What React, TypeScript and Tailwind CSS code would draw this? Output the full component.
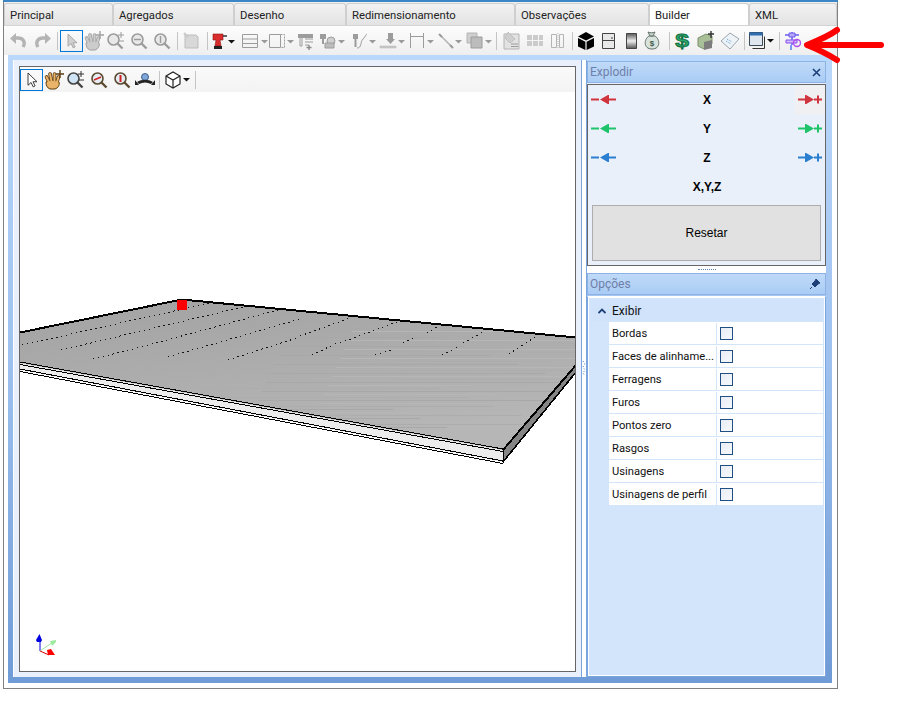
import type { ReactNode } from "react";

const tabs = [
  { label: "Principal", w: "w-[109px]" },
  { label: "Agregados", w: "w-[121px]" },
  { label: "Desenho", w: "w-[112px]" },
  { label: "Redimensionamento", w: "w-[169px]" },
  { label: "Observações", w: "w-[134px]" },
  { label: "Builder", w: "w-[100px]", active: true },
  { label: "XML", w: "w-[88px]" },
];

const options = ["Bordas", "Faces de alinhame...", "Ferragens", "Furos", "Pontos zero", "Rasgos", "Usinagens", "Usinagens de perfil"];

const G = "#b4b4b4";
const D = "#9c9c9c";

function Ic({ w, children }: { w: number; children?: ReactNode }) {
  return (
    <svg width={w} height={22} viewBox={`0 0 ${w} 22`} className="shrink-0">
      {children}
    </svg>
  );
}

function Sep({ w, x }: { w: number; x: number }) {
  return (
    <Ic w={w}>
      <path d={`M${x + 0.5} 2V20`} stroke="#c4c4c4" />
    </Ic>
  );
}

function Caret({ x, c = "#9a9a9a" }: { x: number; c?: string }) {
  return <path d={`M${x} 10h7l-3.5 3.5z`} fill={c} />;
}

function Cursor({ c = G, s = "#8a8a8a" }: { c?: string; s?: string }) {
  return <path d="M8 3v14l3.5-3.2 2.4 5 2.2-1-2.4-4.8h4.6z" fill={c} stroke={s} />;
}

function Glass({ x, c, hl = "#e8e8e8" }: { x: number; c: string; hl?: string }) {
  return (
    <>
      <circle cx={x + 6.5} cy={9.5} r={5.5} fill={hl} stroke={c} strokeWidth={1.6} />
      <path d={`M${x + 10.5} 13.5l5 5`} stroke={c} strokeWidth={2.4} />
    </>
  );
}

function Hand({ c, s }: { c: string; s: string }) {
  const fingers = ["M6 13L3.5 8", "M8.5 12L7 5", "M11.5 12L11.5 5", "M14 13L15.5 8"];
  return (
    <>
      {fingers.map((d) => (
        <path key={d} d={d} stroke={s} strokeWidth={3.6} strokeLinecap="round" />
      ))}
      <path d="M3 13c2-2 10-2 13 0 1 3-1 6-4 7H7c-3-1-4-4-4-7z" fill={c} stroke={s} />
      {fingers.map((d) => (
        <path key={d + "f"} d={d} stroke={c} strokeWidth={2} strokeLinecap="round" />
      ))}
      <path d="M17 1v8M13 5h8" stroke={s} strokeWidth={1.4} />
    </>
  );
}

function MainToolbar() {
  return (
    <div className="flex h-[29px] items-center bg-gradient-to-b from-[#fdfdfd] to-[#eeeeee] pl-[3px]">
      <Ic w={23}>
        <path d="M16 17c3-5 0-9-5-9H7" fill="none" stroke={G} strokeWidth={3.4} />
        <path d="M9 3L3 8.5 9 14z" fill={G} />
      </Ic>
      <Ic w={24}>
        <path d="M8 17c-3-5 0-9 5-9h4" fill="none" stroke={G} strokeWidth={3.4} />
        <path d="M15 3l6 5.5-6 5.5z" fill={G} />
      </Ic>
      <Sep w={6} x={3} />
      <div className="flex h-[22px] w-[23px] shrink-0 items-center justify-center border border-[#0078d7]">
        <svg width={21} height={20} viewBox="0 0 24 22"><Cursor c="#d0d0d0" s="#a0a0a0" /></svg>
      </div>
      <Ic w={22}><Hand c="#cccccc" s="#a0a0a0" /></Ic>
      <Ic w={23}>
        <Glass x={2} c={D} />
        <path d="M16 2v6M13 5h6M14 11h5" stroke={D} />
      </Ic>
      <Ic w={23}>
        <Glass x={3} c={D} />
        <path d="M6 9.5h7" stroke={D} strokeWidth={1.4} />
      </Ic>
      <Ic w={22}>
        <Glass x={3} c={D} />
        <path d="M9.5 6v7" stroke={D} strokeWidth={1.4} />
      </Ic>
      <Sep w={8} x={4} />
      <Ic w={21}>
        <path d="M4 5h11l2 2v11H4z" fill="#d8d8d8" stroke="#bdbdbd" />
        <path d="M3 3l4 4" stroke="#c8c8c8" strokeWidth={2} />
      </Ic>
      <Sep w={10} x={5} />
      <Ic w={26}>
        <path d="M1 4h10v6H8l1 6H3l1-6H1z" fill="#d92c2c" stroke="#8e1212" strokeWidth={0.6} />
        <path d="M11 6h4" stroke="#333" strokeWidth={1.5} />
        <path d="M2 16h8v3H2z" fill="#222" />
        <path d="M16 10h7l-3.5 3.5z" fill="#111" />
      </Ic>
      <Ic w={30}>
        <path d="M4.5 4.5h15v13h-15zM4.5 9h15M4.5 13.5h15" fill="none" stroke={D} />
        <Caret x={23} />
      </Ic>
      <Ic w={27}>
        <path d="M1.5 4.5h11v13h-11z" fill="none" stroke={D} />
        <path d="M12.5 4.5h4v13h-4" fill="none" stroke={D} strokeDasharray="2 1" />
        <Caret x={19} />
      </Ic>
      <Ic w={22}>
        <path d="M3 4h15v4H3z" fill={D} />
        <path d="M5 8v8h2V8M10 9h8M10 12h8M10 15h4" stroke={D} fill="none" />
        <path d="M14 15v5M11.5 17.5h5" stroke="#8a8a8a" strokeWidth={1.4} />
      </Ic>
      <Ic w={32}>
        <path d="M3 4h6v5H7v5H5V9H3z" fill={D} />
        <circle cx={14} cy={11} r={4} fill="#cfcfcf" stroke={D} />
        <path d="M8 13h9v5H8z" fill="#bdbdbd" stroke={D} />
        <Caret x={21} />
      </Ic>
      <Ic w={30}>
        <path d="M4 4h5v5H7.5v8H5.5V9H4z" fill={D} />
        <path d="M8 18c5 0 3-6 6-9s3-5 4-5" fill="none" stroke={D} />
        <Caret x={20} />
      </Ic>
      <Ic w={30}>
        <path d="M9 3h5v6H9zM7 9h9l-4.5 5z" fill={D} />
        <path d="M1 16h16v2H1z" fill="#c8c8c8" stroke={G} strokeWidth={0.5} />
        <Caret x={19} />
      </Ic>
      <Ic w={29}>
        <path d="M1.5 3v15M14.5 3v15M1.5 6.5h13" fill="none" stroke={D} />
        <Caret x={18} />
      </Ic>
      <Ic w={28}>
        <path d="M2 5l12 12" stroke={G} strokeWidth={1.6} />
        <path d="M1 4l3 3M12 15l3 3" stroke={D} strokeWidth={2} />
        <Caret x={17} />
      </Ic>
      <Ic w={29}>
        <path d="M1 3h10v10H1z" fill="#cfcfcf" stroke={G} />
        <path d="M5 7h11v11H5z" fill="#bcbcbc" stroke={D} />
        <Caret x={19} />
      </Ic>
      <Sep w={8} x={1} />
      <Ic w={23}>
        <path d="M1 4h15v15H1z" fill="#e2e2e2" stroke={G} />
        <path d="M5 2l7 7-5 4-5-5z" fill="#cfcfcf" stroke={G} strokeDasharray="2 1" />
        <path d="M8 14h7M8 16.5h7" stroke={D} />
      </Ic>
      <Ic w={23}>
        <path d="M1 5h5v5H1zM7 5h5v5H7zM13 5h4v5h-4zM1 11h5v5H1zM7 11h5v5H7zM13 11h4v5h-4z" fill="#cbcbcb" />
      </Ic>
      <Ic w={22}>
        <path d="M2.5 4.5h5v13h-5zM10.5 4.5h4v13h-4z" fill="none" stroke={G} />
        <path d="M9 3v16" stroke={G} strokeDasharray="1 1" />
      </Ic>
      <Sep w={6} x={1} />
      <Ic w={22}>
        <path d="M1 6.5l8-4.5 8 4.5-8 4z" fill="#000" />
        <path d="M1 8l7.4 3.8v8.2L1 16.5zM17 8l-7.4 3.8v8.2l7.4-3.5z" fill="#000" />
      </Ic>
      <Ic w={23}>
        <path d="M3.5 3.5h12v15h-12z" fill="#e8e8e8" stroke="#444" />
        <path d="M3.5 10.5h12" stroke="#444" />
        <path d="M12 8h2" stroke="#444" />
      </Ic>
      <svg width={22} height={22} viewBox="0 0 22 22" className="shrink-0">
        <defs>
          <linearGradient id="steel" x1="0" y1="0" x2="0" y2="1">
            <stop offset="0" stopColor="#555" />
            <stop offset="0.5" stopColor="#eee" />
            <stop offset="1" stopColor="#555" />
          </linearGradient>
        </defs>
        <path d="M4.5 3.5h10v15h-10z" fill="url(#steel)" stroke="#444" />
      </svg>
      <Ic w={22}>
        <path d="M5 6c-5 3-6 13 3 13s8-10 3-13z" fill="#d8e2dc" stroke="#5f6f66" />
        <path d="M4 2c2 1 5 1 7 0L9 6H6z" fill="#c8d4cc" stroke="#5f6f66" />
        <text x={8} y={16} fontSize={8} fontWeight={700} fill="#40584a" textAnchor="middle" fontFamily="Liberation Sans, sans-serif">$</text>
      </Ic>
      <Sep w={7} x={3} />
      <Ic w={19}>
        <text x={7} y={17} fontSize={19} fontWeight={700} fill="#2aa56c" stroke="#0f6a3c" strokeWidth={0.8} textAnchor="middle" fontFamily="Liberation Sans, sans-serif" transform="scale(1.3 1)">$</text>
      </Ic>
      <Ic w={24}>
        <g transform="translate(4 0)">
          <path d="M2 8l8-4 6 2v8l-8 5-6-3z" fill="#a9bf98" stroke="#7b8f6c" />
          <path d="M8 12l8-2v8l-8 2z" fill="#7d7d7d" />
          <path d="M15 1v7M12 4h6" stroke="#333" strokeWidth={1.4} />
        </g>
      </Ic>
      <Ic w={24}>
        <g transform="translate(3 0)">
          <path d="M2 11l9-8 9 6-9 10z" fill="#eef3f8" stroke="#9aa6b0" />
          <path d="M8 9l5 3M7 11l5 3" stroke="#5a9fd6" strokeDasharray="1 1" />
        </g>
      </Ic>
      <Sep w={6} x={4} />
      <Ic w={29}>
        <g transform="translate(2 0)">
          <path d="M1.5 2.5h13v13h-13z" fill="#dfe6ee" stroke="#3a4a5a" />
          <path d="M1.5 2.5h13v3h-13z" fill="#2f6cb0" />
          <path d="M4.5 18.5h12v-12" fill="none" stroke="#333" />
          <path d="M19 9h7l-3.5 3.5z" fill="#111" />
        </g>
      </Ic>
      <Sep w={6} x={4} />
      <Ic w={20}>
        <g transform="translate(3 0)">
          <path d="M1 5h14M8 2v13" stroke="#6a5cf0" strokeWidth={1.5} />
          <path d="M5 3h6v4H5z" fill="#b9a8f5" stroke="#6a5cf0" />
          <path d="M2 10h11v3H2z" fill="#cdbff8" stroke="#8a4ff0" />
          <circle cx={13} cy={13} r={3.5} fill="none" stroke="#b04ff0" strokeWidth={1.4} />
          <path d="M7 15v5" stroke="#4f7cf0" strokeWidth={1.5} />
        </g>
      </Ic>
    </div>
  );
}

function ViewToolbar() {
  return (
    <div className="flex h-[25px] items-center bg-gradient-to-b from-[#fafafa] to-[#f3f3f3]">
      <div className="flex h-[22px] w-[23px] shrink-0 items-center justify-center border border-[#0078d7]">
        <svg width={21} height={20} viewBox="0 0 24 22"><Cursor c="white" s="#222" /></svg>
      </div>
      <Ic w={22}><Hand c="#e9b469" s="#5b3c10" /></Ic>
      <Ic w={23}>
        <Glass x={2} c="#444" hl="#cfe3f5" />
        <path d="M16 2v6M13 5h6M14 11h5" stroke="#333" />
      </Ic>
      <Ic w={23}>
        <Glass x={3} c="#5a4a30" hl="#e4ecf4" />
        <path d="M6 11l7-3" stroke="#d02020" strokeWidth={1.4} />
      </Ic>
      <Ic w={22}>
        <Glass x={3} c="#5a4a30" hl="#e4ecf4" />
        <path d="M9.5 6v7" stroke="#d02020" strokeWidth={2} />
      </Ic>
      <Ic w={25}>
        <circle cx={12} cy={8} r={3.5} fill="#7ea6d8" stroke="#3c5f88" />
        <path d="M4 13c5-3 11-3 16 0l-2 2c-4-2-8-2-12 0z" fill="#222" />
        <path d="M2 11v5h4zM22 11v5h-4z" fill="#222" />
      </Ic>
      <Ic w={6}>
        <path d="M1.5 2v18" stroke="#c4c4c4" />
      </Ic>
      <Ic w={29}>
        <path d="M2 7l7-4 7 4v8l-7 4-7-4z" fill="white" stroke="#222" strokeWidth={1.2} />
        <path d="M2 7l7 4 7-4M9 11v8" fill="none" stroke="#222" strokeWidth={1.2} />
        <path d="M19 9h7l-3.5 3.5z" fill="#111" />
      </Ic>
      <Ic w={6}>
        <path d="M2.5 2v18" stroke="#c4c4c4" />
      </Ic>
    </div>
  );
}

// linhas pontilhadas da chapa, coordenadas da area de desenho (origem 20,92)
const dotted = [
  [2, 253, 190, 211],
  [41, 258, 223, 215],
  [73, 267, 117, 256],
  [117, 256, 258, 218],
  [148, 265, 280, 227],
  [280, 244, 330, 226],
  [208, 268, 280, 245],
  [292, 263, 317, 251],
  [320, 251, 377, 230],
  [355, 263, 372, 258],
  [383, 251, 397, 244],
  [407, 241, 417, 235],
  [422, 263, 438, 255],
  [443, 251, 465, 239],
  [489, 262, 515, 245],
];
const streaks = Array.from({ length: 36 }, (_, i) => ({
  y: 236 + i * 3,
  x: 90 + ((i * 67) % 190) + (36 - i) * 5,
  w: 120 + ((i * 97) % 260),
  c: i % 3 === 0 ? "#a8a8a8" : i % 3 === 1 ? "#b6b6b6" : "#adadad",
}));

function Scene() {
  return (
    <div className="relative min-w-0 flex-1 overflow-hidden bg-white">
      <svg width={556} height={579} viewBox="0 0 556 579" className="block">
        <defs>
          <linearGradient id="plate" x1="0" y1="0" x2="0.4" y2="1">
            <stop offset="0" stopColor="#a3a2a2" />
            <stop offset="1" stopColor="#b6b6b6" />
          </linearGradient>
          <clipPath id="top">
            <path d="M0 241L162 208L556 246V273L483 358L0 271z" />
          </clipPath>
        </defs>
        <path d="M0 271L483 358V370L0 278z" fill="#ececec" />
        <path d="M556 273L483 358V370L556 280z" fill="#858585" />
        <path d="M0 241L162 208L556 246V273L483 358L0 271z" fill="url(#plate)" />
        <g clipPath="url(#top)" shapeRendering="crispEdges">
          {streaks.map((s) => (
            <path key={s.y} d={`M${s.x} ${s.y}h${s.w}`} stroke={s.c} />
          ))}
        </g>
        <g shapeRendering="crispEdges">
          {dotted.map(([x1, y1, x2, y2]) => (
            <line key={`${x1}-${y1}`} x1={x1} y1={y1} x2={x2} y2={y2} stroke="#111" strokeDasharray="1.5 3.5" />
          ))}
        </g>
        <g fill="none" stroke="#000" shapeRendering="crispEdges">
          <path d="M0 240.5L162 207.5L556 245.5" strokeWidth={2} />
          <path d="M0 270L483 357M0 272.5L483 359.5M0 277L483 369M0 279.5L483 371.5" strokeWidth={1} />
          <path d="M556 273L483 358" strokeWidth={2} />
          <path d="M556 280L483 370" strokeWidth={1.6} />
          <path d="M483 358V371" strokeWidth={1} />
        </g>
        <rect x={157} y={208} width={10} height={10} fill="#ff0000" />
        <path d="M20 559V548" stroke="#0000e0" strokeWidth={1} />
        <path d="M19.5 542l2.5 6-1 2h-4l-1-2z" fill="#0000e0" />
        <path d="M20 559l13-9" stroke="#9fe89f" />
        <path d="M36 548l-6 1 2 5 4-4z" fill="#9fe89f" />
        <path d="M20 559l9 4" stroke="#e00000" />
        <path d="M27 558l4-1 4 6h-7z" fill="#ff0000" />
      </svg>
    </div>
  );
}

function ArrowBtn({ d, c, b }: { d: "l" | "r"; c: string; b?: string }) {
  return (
    <div className={`flex h-[29px] w-[30px] items-center justify-center ${b ?? "bg-[#eaf0f9]"}`}>
      <svg width={25} height={9} viewBox="0 0 25 9">
        {d === "l" ? (
          <path d="M0 4.5h8M12 4.5h13M17 1L11 4.5 17 8z" stroke={c} strokeWidth={2} fill={c} />
        ) : (
          <path d="M0 4.5h13M8 1l6 3.5L8 8zM16 4.5h8M20 0.5v8" stroke={c} strokeWidth={2} fill={c} />
        )}
      </svg>
    </div>
  );
}

function AxisRow({ label, c, b }: { label: string; c?: string; b?: string }) {
  return (
    <div className="flex h-[29px] items-center">
      {c ? <ArrowBtn d="l" c={c} /> : <div className="w-[30px]" />}
      <div className="flex-1 pl-px text-center text-[12px] font-bold text-black">{label}</div>
      {c ? <ArrowBtn d="r" c={c} b={b} /> : <div className="w-[30px]" />}
    </div>
  );
}

function PanelHeader({ title, children }: { title: string; children: ReactNode }) {
  return (
    <div className="flex h-[22px] items-center justify-between border border-[#8cb2e6] bg-gradient-to-b from-[#c0daf8] to-[#a9ccf5] pl-[2px] pr-[4px] text-[12px] text-[#6f7fa8] [font-family:Roboto,sans-serif]">
      <span>{title}</span>
      {children}
    </div>
  );
}

export default function App() {
  return (
    <div className="h-[716px] w-[903px] overflow-hidden bg-white [font-family:'Liberation_Sans',sans-serif]">
      <div className="relative ml-[3px] flex h-[689px] w-[835px] flex-col border-x border-b border-[#808080] border-t-0">
        <div className="-mx-[1px] h-[2px] bg-[#3c86c8]" />
        <div className="flex h-[24px] items-end gap-0 border-b border-[#d4d4d4] bg-[#f0f0f0] pt-px [font-family:Roboto,sans-serif]">
          {tabs.map((t) => (
            <div
              key={t.label}
              className={`flex h-full ${t.w} items-center rounded-t-[3px] border border-b-0 border-[#cfcfcf] pl-[5px] pt-[3px] text-[11.3px] text-[#222] ${t.active ? "bg-white" : "bg-gradient-to-b from-[#f2f2f2] to-[#e3e3e3]"}`}
            >
              {t.label}
            </div>
          ))}
        </div>
        <MainToolbar />
        <div className="flex h-[628px] w-[824px] flex-col self-start ml-[4px] bg-gradient-to-b from-[#bad8fb] via-[#9dc0ee] to-[#6f9bd6] pb-[6px] pl-[5px] pr-[6px] pt-[5px]">
          <div className="flex min-h-0 flex-1">
            <div className="flex w-[568px] shrink-0 border-l border-white bg-[#e9f0fb] pb-[5px] pl-[5px] pr-[5px] pt-[6px]">
              <div className="flex min-w-0 flex-1 flex-col border border-[#666]">
                <ViewToolbar />
                <Scene />
              </div>
            </div>
            <div className="flex w-[5px] shrink-0 flex-col items-center justify-center border-l border-[#7ba5de] bg-white">
              <svg width={4} height={18} viewBox="0 0 4 18">
                <path d="M1 1l2 3-2 3 2 3-2 3 2 3" fill="none" stroke="#3c78c0" strokeDasharray="1 2" />
              </svg>
            </div>
            <div className="flex min-w-0 flex-1 flex-col border-l border-[#7ba5de] pt-[1px]">
              <div className="bg-[#e9f0fb]">
                <PanelHeader title="Explodir">
                  <svg width={9} height={9} viewBox="0 0 9 9">
                    <path d="M1 1l7 7M8 1L1 8" stroke="#1d3f78" strokeWidth={1.6} />
                  </svg>
                </PanelHeader>
                <div className="mt-px flex h-[182px] flex-col border border-[#666] bg-[#e9f0fa] text-[12px]">
                  <div>
                    <AxisRow label="X" c="#d0353f" b="bg-[#f0f0f2]" />
                    <AxisRow label="Y" c="#1fc46a" />
                    <AxisRow label="Z" c="#2b7fd0" />
                    <AxisRow label="X,Y,Z" />
                  </div>
                  <div className="mx-[4px] mt-[4px] flex h-[56px] items-center justify-center border border-[#adadad] bg-[#e1e1e1] text-black">
                    Resetar
                  </div>
                </div>
              </div>
              <div className="flex h-[7px] items-center justify-center bg-white">
                <div className="h-[2px] w-[18px] border-t border-dotted border-[#5f86b8]" />
              </div>
              <PanelHeader title="Opções">
                <svg width={12} height={12} viewBox="0 0 12 12">
                  <path d="M7 1l4 4-2 1-2 2-1 1-3-3 1-1 2-2zM3 9L1 11" fill="#1d3f78" stroke="#1d3f78" />
                </svg>
              </PanelHeader>
              <div className="mt-px flex-1 border border-[#7ba5de] border-t-white bg-[#d3e5fb] outline outline-1 -outline-offset-2 outline-white [font-family:Roboto,sans-serif]">
                <div className="ml-[3px] mr-[4px] mt-[3px] flex h-[21px] items-center gap-[6px] bg-[#d0e3fb] pl-[7px] text-[12px] text-[#111]">
                  <svg width={8} height={6} viewBox="0 0 8 6">
                    <path d="M0.5 5L4 1.5 7.5 5" fill="none" stroke="#1d3f78" strokeWidth={1.8} />
                  </svg>
                  Exibir
                </div>
                <div className="ml-[21px] mr-[2px] mt-[1px]">
                  {options.map((o) => (
                    <div key={o} className="flex h-[23px] border-b border-[#d3e5fb] bg-white pt-px">
                      <div className="flex w-[108px] items-center whitespace-nowrap border-r border-[#d3e5fb] pl-[3px] pt-[2px] text-[11.2px] text-[#111]">{o}</div>
                      <div className="flex flex-1 items-center pl-[3px]">
                        <div className="size-[13px] border border-[#1f4f85] bg-gradient-to-br from-[#e9eef5] to-[#f6f8fb]" />
                      </div>
                    </div>
                  ))}
                </div>
              </div>
            </div>
          </div>
        </div>
      </div>
      <svg width={84} height={38} viewBox="0 0 84 38" className="absolute left-[803px] top-[26px]">
        <path d="M5 19H78" stroke="#ff0000" strokeWidth={6} strokeLinecap="round" />
        <path d="M34 4C26 10 14 15 4 19 14 23 26 29 34 34" fill="none" stroke="#ff0000" strokeWidth={6} strokeLinecap="round" strokeLinejoin="round" />
      </svg>
    </div>
  );
}
